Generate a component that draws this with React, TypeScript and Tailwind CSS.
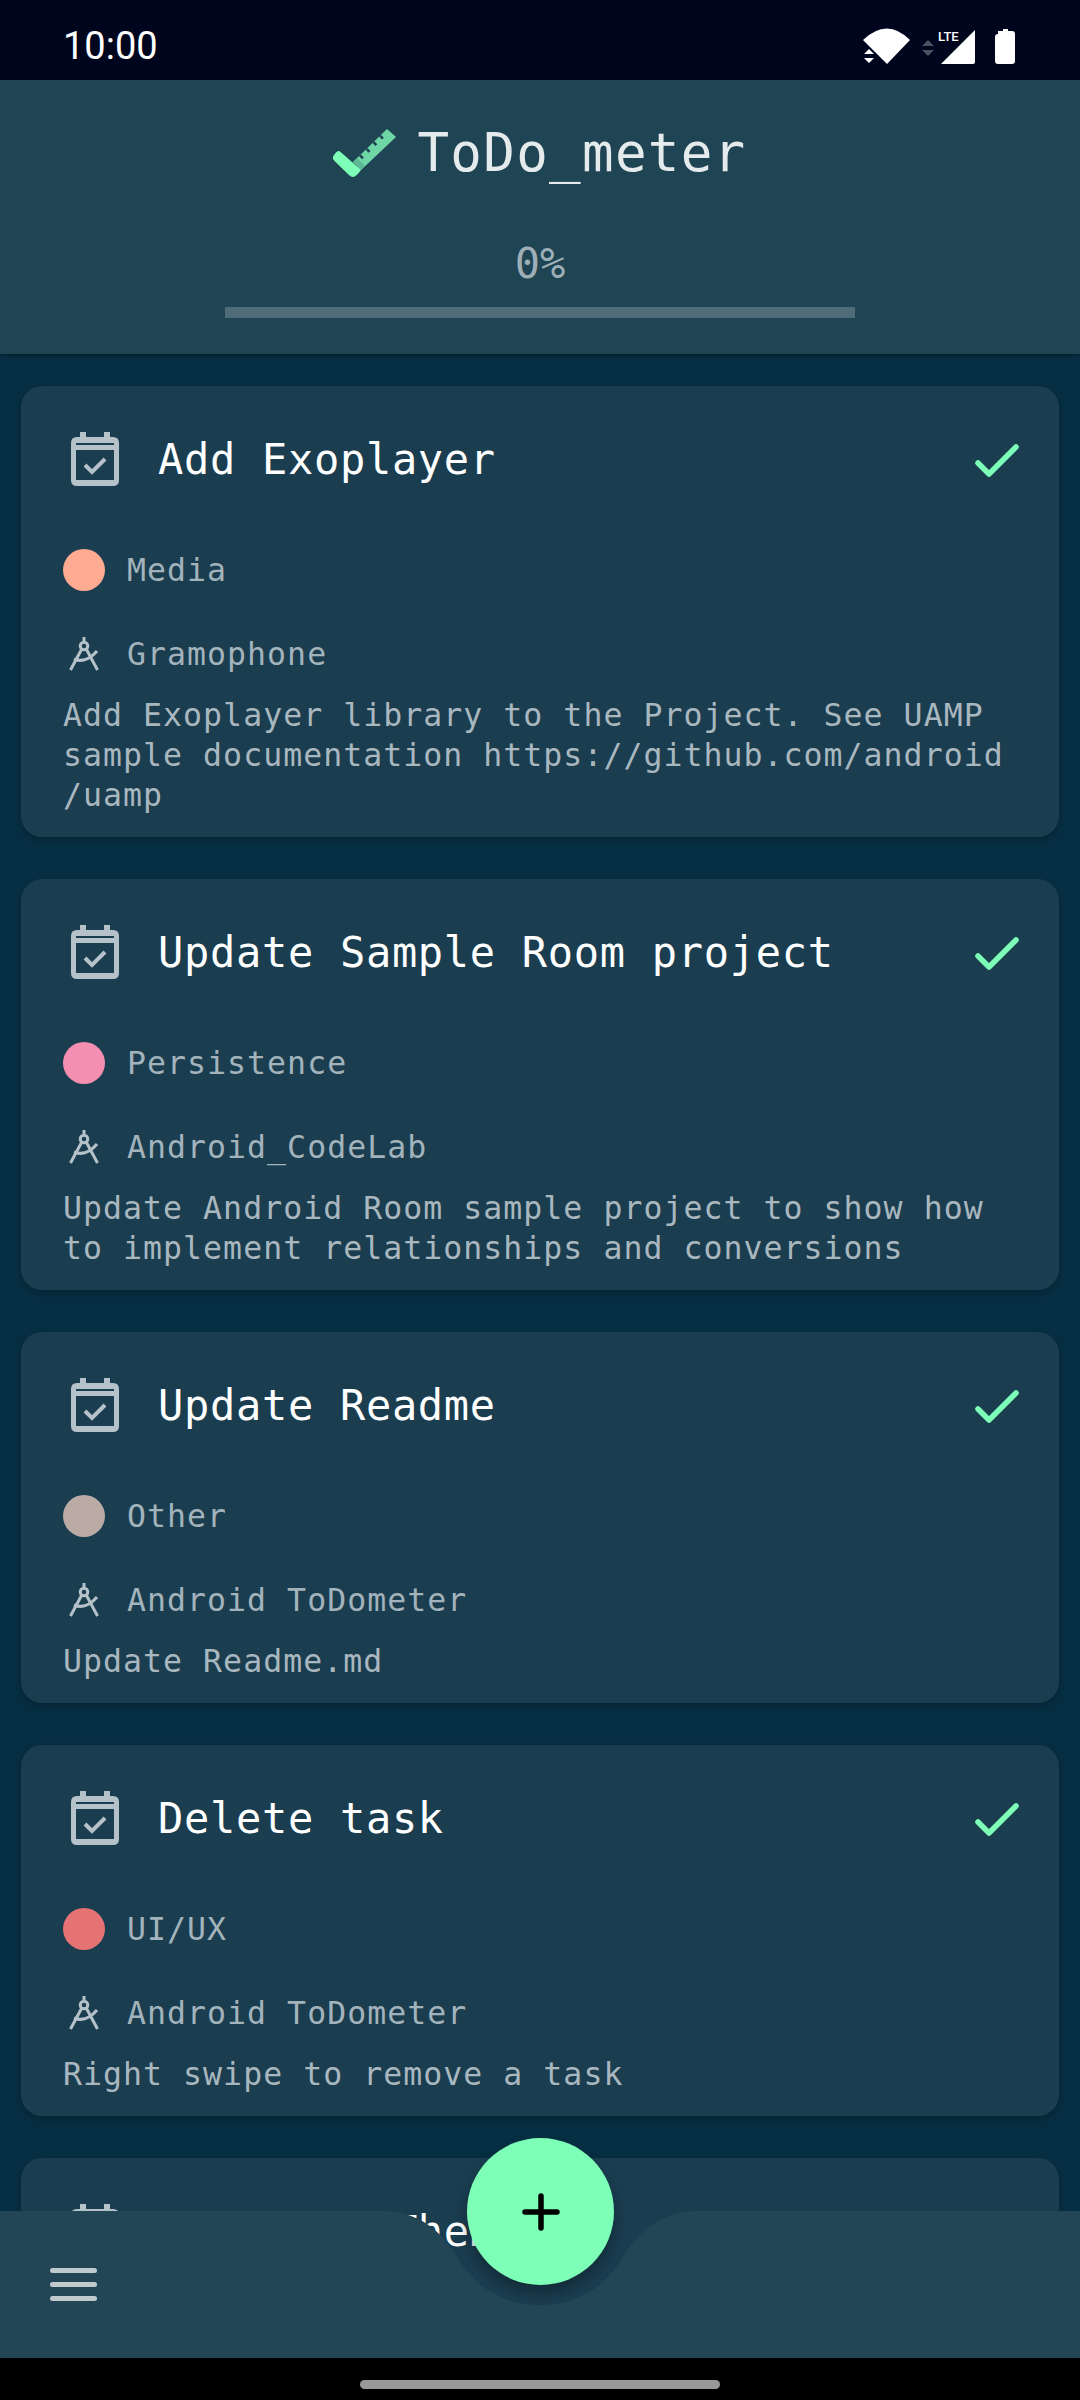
const mono = "font-['DejaVu_Sans_Mono',monospace]";

type TaskItem = {
  title: string;
  tagColor: string;
  tag: string;
  project: string;
  lines: string[];
};

const tasks: TaskItem[] = [
  {
    title: "Add Exoplayer",
    tagColor: "bg-[#ffab91]",
    tag: "Media",
    project: "Gramophone",
    lines: [
      "Add Exoplayer library to the Project. See UAMP",
      "sample documentation https://github.com/android",
      "/uamp",
    ],
  },
  {
    title: "Update Sample Room project",
    tagColor: "bg-[#f48fb1]",
    tag: "Persistence",
    project: "Android_CodeLab",
    lines: [
      "Update Android Room sample project to show how",
      "to implement relationships and conversions",
    ],
  },
  {
    title: "Update Readme",
    tagColor: "bg-[#bcaaa4]",
    tag: "Other",
    project: "Android ToDometer",
    lines: ["Update Readme.md"],
  },
  {
    title: "Delete task",
    tagColor: "bg-[#e57373]",
    tag: "UI/UX",
    project: "Android ToDometer",
    lines: ["Right swipe to remove a task"],
  },
  {
    title: "Add Dark Theme",
    tagColor: "bg-[#e57373]",
    tag: "UI/UX",
    project: "Android ToDometer",
    lines: ["Add a dark theme"],
  },
];

function StatusIcons() {
  return (
    <svg width="170" height="50" viewBox="860 20 170 50" className="block">
      <path d="M863 39 Q887 16 910 39 L887 63 Z" fill="#fff" />
      <path d="M864 53 l5 -5 l5 5 Z M864 57 l5 5 l5 -5 Z" fill="#fff" />
      <path d="M922 45 l6 -6 l6 6 Z M922 49 l6 6 l6 -6 Z" fill="#fff" opacity="0.3" />
      <path d="M975 29 V61 Q975 63 973 63 H941 Z" fill="#fff" />
      <path d="M998 33 V30 H1003 V28 H1008 V30 H1012 Q1015 30 1015 33 V60 Q1015 63 1012 63 H998 Q995 63 995 60 V36 Q995 33 998 33 Z" fill="#fff" />
    </svg>
  );
}

function Logo() {
  return (
    <svg width="70" height="56" viewBox="20 15 70 56" className="block">
      <path d="M43 52 L77 19 L86 27 L51 60 Z" fill="#6fd6a5" />
      <path d="M43 52 L51 60 L55 56 L47 48 Z" fill="#5fb894" />
      <path
        d="M50 45.4 L53 48.4 M56.6 38.8 L59.6 41.8 M63.4 32.2 L66.4 35.2 M70 25.6 L73 28.6"
        stroke="#1f4454"
        strokeWidth="2.6"
      />
      <path
        d="M30 41.5 L51 60 Q46 67 43 67 Q41 67 39 65 L24.5 51 Q21.5 48 24 45 L26 42.5 Q28 40 30 41.5 Z"
        fill="#7dffb7"
      />
    </svg>
  );
}

function CalendarCheck() {
  return (
    <svg width="48" height="54" viewBox="0 0 48 54" fill="none" className="block">
      <path d="M9 0 H15 V5 H33 V0 H39 V5 H42 Q48 5 48 11 V48 Q48 54 42 54 H6 Q0 54 0 48 V11 Q0 5 6 5 H9 Z" fill="#b6c2c9" />
      <rect x="5" y="11" width="38" height="2" fill="#1a3d50" />
      <rect x="5" y="18" width="38" height="30" fill="#1a3d50" />
      <path d="M14 33 L21 40 L34 27" stroke="#b6c2c9" strokeWidth="4" />
    </svg>
  );
}

function Compass() {
  return (
    <svg width="30" height="34" viewBox="0 0 30 34" fill="none" stroke="#b6c2c9" className="block">
      <path d="M15 0 V4" strokeWidth="3" />
      <circle cx="15" cy="9" r="3.8" strokeWidth="3" />
      <path d="M12.5 12.5 L1.5 33 M17.5 12.5 L28.5 33" strokeWidth="3" />
      <path d="M5 22 Q17 27 28 14" strokeWidth="3" />
    </svg>
  );
}

function Check() {
  return (
    <svg width="46" height="36" viewBox="0 0 46 36" fill="none" className="block mt-[4px]">
      <path
        d="M4 20 L15 31 L42 4"
        stroke="#7dffb7"
        strokeWidth="5.5"
        strokeLinecap="round"
        strokeLinejoin="round"
      />
    </svg>
  );
}

function TaskCard({ task }: { task: TaskItem }) {
  return (
    <div className="rounded-[21px] bg-[#1a3d50] pt-[44px] pb-[22px] pl-[42px] pr-[39px] shadow-[0_3px_8px_rgba(0,0,0,0.25)] shrink-0">
      <div className="flex items-center h-[58px]">
        <div className="ml-[8px] mr-[39px]">
          <CalendarCheck />
        </div>
        <span className="pt-[2px] text-[42px] leading-[58px] tracking-[0.7px] text-white flex-1 whitespace-nowrap">
          {task.title}
        </span>
        <Check />
      </div>
      <div className="flex items-center h-[42px] mt-[61px] text-[31.5px] tracking-[1.05px] text-[#a3b3bb]">
        <div className={`w-[42px] h-[42px] rounded-full ${task.tagColor}`} />
        <span className="ml-[22px] pt-[2px]">{task.tag}</span>
      </div>
      <div className="flex items-center h-[42px] mt-[42px] text-[31.5px] tracking-[1.05px] text-[#a3b3bb]">
        <div className="ml-[6px] mr-[28px]">
          <Compass />
        </div>
        <span className="pt-[2px]">{task.project}</span>
      </div>
      <div className="mt-[20px] text-[31.5px] leading-[40px] tracking-[1.05px] text-[#a9b7bf]">
        {task.lines.map((line) => (
          <div key={line} className="whitespace-nowrap">
            {line}
          </div>
        ))}
      </div>
    </div>
  );
}

export default function App() {
  return (
    <div className={`relative flex flex-col w-[1080px] h-[2400px] overflow-hidden bg-[#072f43] ${mono}`}>
      <div className="flex items-center justify-between h-[80px] shrink-0 bg-[#00051e] pt-[12px] pl-[63px] pr-[50px]">
        <span className="font-['Roboto',sans-serif] text-[38px] text-white">10:00</span>
        <div className="relative">
          <StatusIcons />
          <span className="absolute left-[78px] top-[9px] font-['Roboto',sans-serif] font-medium text-[13px] leading-[13px] text-white">
            LTE
          </span>
        </div>
      </div>

      <div className="flex flex-col items-center h-[274px] shrink-0 bg-[#1f4454] shadow-[0_2px_4px_rgba(0,0,0,0.3)] z-10">
        <div className="flex items-center mt-[46px] h-[54px] pr-[3px]">
          <Logo />
          <span className="ml-[17px] text-[52.5px] leading-[54px] tracking-[1.3px] text-[#e5eaec]">
            ToDo_meter
          </span>
        </div>
        <span className="mt-[60px] text-[42px] leading-[48px] text-[#9fafb7]">0%</span>
        <div className="mt-[19px] w-[630px] h-[11px] bg-[#506c79]" />
      </div>

      <div className="flex flex-col flex-1 gap-[42px] overflow-hidden pt-[32px] px-[21px] min-h-0">
        {tasks.map((task) => (
          <TaskCard key={task.title} task={task} />
        ))}
      </div>

      <div className="h-[42px] shrink-0 bg-black flex items-center justify-center z-20">
        <div className="w-[360px] h-[9px] rounded-full bg-[#999999] mt-[10px]" />
      </div>

      <div className="absolute left-0 bottom-[42px] w-[1080px] h-[147px] z-20">
        <svg width="1080" height="147" viewBox="0 0 1080 147" className="absolute inset-0">
          <path
            d="M0 0 H380 C418 0 440 18 457 46 C476 78 505 94 540 94 C575 94 604 78 623 46 C640 18 662 0 700 0 H1080 V147 H0 Z"
            fill="#234657"
          />
        </svg>
        <div className="absolute left-[50px] top-[57px] flex flex-col gap-[9px]">
          <div className="w-[47px] h-[5px] rounded-full bg-[#c0cace]" />
          <div className="w-[47px] h-[5px] rounded-full bg-[#c0cace]" />
          <div className="w-[47px] h-[5px] rounded-full bg-[#c0cace]" />
        </div>
      </div>

      <div className="absolute left-[467px] top-[2138px] w-[147px] h-[147px] rounded-full bg-[#7dffb7] flex items-center justify-center z-30 shadow-[0_8px_14px_rgba(0,0,0,0.3)]">
        <svg width="38" height="38" viewBox="0 0 38 38" className="block">
          <path d="M19 3 V35 M3 19 H35" stroke="#000" strokeWidth="5.5" strokeLinecap="round" />
        </svg>
      </div>
    </div>
  );
}
